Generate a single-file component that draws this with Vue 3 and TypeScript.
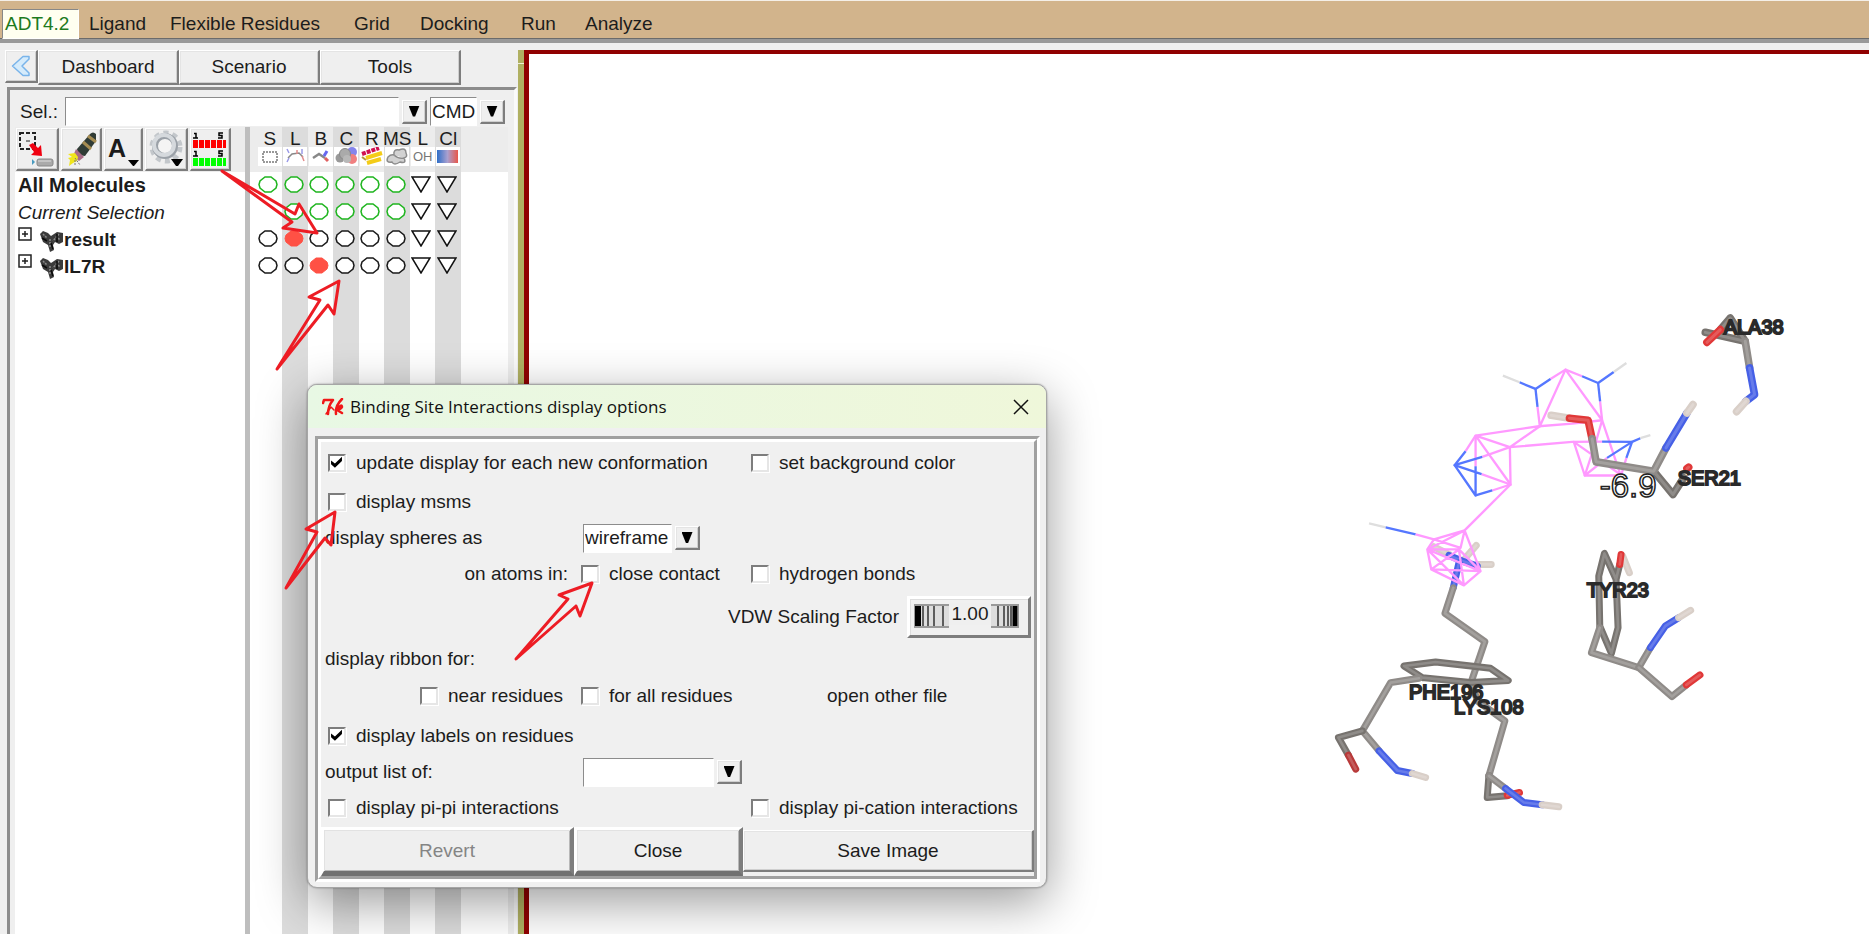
<script setup lang="ts">
import { ref } from 'vue'

type Mark = 'none' | 'green' | 'black' | 'filled' | 'menu'
interface Row { name: string; kind: 'all' | 'selection' | 'molecule'; marks: Mark[] }
interface Stick { color: string; points: string }

const menus = ['Ligand', 'Flexible Residues', 'Grid', 'Docking', 'Run', 'Analyze']
const tabs = ['Dashboard', 'Scenario', 'Tools']

const rows: Row[] = [
  { name: 'All Molecules', kind: 'all', marks: ['green', 'green', 'green', 'green', 'green', 'green', 'menu', 'menu'] },
  { name: 'Current Selection', kind: 'selection', marks: ['none', 'green', 'green', 'green', 'green', 'green', 'menu', 'menu'] },
  { name: 'result', kind: 'molecule', marks: ['black', 'filled', 'black', 'black', 'black', 'black', 'menu', 'menu'] },
  { name: 'IL7R', kind: 'molecule', marks: ['black', 'black', 'filled', 'black', 'black', 'black', 'menu', 'menu'] },
]
const columns = ['S', 'L', 'B', 'C', 'R', 'MS', 'L', 'Cl']

const update = ref(true)
const labels = ref(true)
const off = ref<string[]>([])

const GRAY = '#8f8b88'
const BLUE = '#4660e6'
const RED = '#e03838'
const BONE = '#d9cfc8'
const DARK = '#77736f'
const PINK = '#ff99ff'
const AZURE = '#5577ff'
const PALE = '#dedede'

const upperThin: Stick[] = [
  { color: PINK, points: '350,408 540,380 640,372 730,362' },
  { color: PINK, points: '350,500 350,408 453,443 455,555 350,408' },
  { color: PINK, points: '543,380 453,443 640,427 730,426' },
  { color: PINK, points: '453,443 370,472' },
  { color: PINK, points: '320,455 350,408' },
  { color: PINK, points: '368,524 455,555 400,573' },
  { color: PINK, points: '455,555 317,693' },
  { color: PINK, points: '536,322 543,380 620,210 730,362 724,305' },
  { color: PINK, points: '670,230 620,210 575,238' },
  { color: PINK, points: '730,362 712,425 678,528 645,427 785,525 730,362' },
  { color: PINK, points: '745,475 678,528 787,528 803,475' },
  { color: AZURE, points: '370,472 287,497 320,455' },
  { color: AZURE, points: '350,500 350,588 287,497 368,524' },
  { color: AZURE, points: '350,588 400,573' },
  { color: AZURE, points: '670,230 718,250 765,217' },
  { color: AZURE, points: '718,250 724,305' },
  { color: AZURE, points: '575,238 530,268 482,248' },
  { color: AZURE, points: '530,268 536,322' },
  { color: AZURE, points: '730,426 820,427 745,475' },
  { color: AZURE, points: '803,475 820,427 845,416' },
  { color: PALE, points: '765,217 803,190' },
  { color: PALE, points: '482,248 432,228' },
  { color: PALE, points: '845,416 875,407' },
]
const upperSticks: Stick[] = [
  { color: BONE, points: '577,347 632,356' },
  { color: RED, points: '632,356 688,362 700,418' },
  { color: RED, points: '985,507 990,503' },
  { color: DARK, points: '885,515 943,585 975,535' },
  { color: GRAY, points: '700,418 712,487 885,515 922,445' },
  { color: BLUE, points: '922,445 985,340' },
  { color: BONE, points: '985,340 1003,315' },
  { color: DARK, points: '1040,98 1160,125 1115,55 1085,90' },
  { color: RED, points: '1085,90 1045,128' },
  { color: GRAY, points: '1160,125 1173,205' },
  { color: BLUE, points: '1173,205 1188,285 1162,305' },
  { color: BONE, points: '1162,305 1134,336' },
]
const lowerSticks: Stick[] = [
  { color: BONE, points: '345,142 390,165' },
  { color: BONE, points: '472,138 440,175' },
  { color: BONE, points: '475,195 517,195' },
  { color: BLUE, points: '390,168 430,185 475,200' },
  { color: BLUE, points: '420,190 403,265' },
  { color: GRAY, points: '403,265 378,342 498,427 458,545 475,605 558,665 510,830' },
  { color: DARK, points: '510,830 505,895 565,890' },
  { color: RED, points: '565,889 602,880' },
  { color: GRAY, points: '510,830 560,868' },
  { color: BLUE, points: '560,868 615,910 670,917' },
  { color: BONE, points: '670,917 720,923' },
  { color: DARK, points: '310,535 255,500 350,488 515,507 568,544 455,550 310,535' },
  { color: GRAY, points: '300,537 215,550 130,695 180,755' },
  { color: DARK, points: '130,695 58,715 88,768' },
  { color: '#b83a3a', points: '88,768 110,810' },
  { color: BLUE, points: '180,755 235,814 280,823' },
  { color: BONE, points: '280,823 320,835' },
  { color: DARK, points: '892,240 857,162 840,230 843,380 878,462 898,385 892,240 903,195' },
  { color: BONE, points: '912,170 932,220' },
  { color: RED, points: '903,195 907,165' },
  { color: GRAY, points: '843,385 818,460 960,505 995,445' },
  { color: BLUE, points: '995,445 1040,380 1080,355' },
  { color: BONE, points: '1080,355 1116,333' },
  { color: GRAY, points: '960,505 1060,592 1103,557' },
  { color: RED, points: '1103,557 1144,527' },
]
const lowerThin: Stick[] = [
  { color: PALE, points: '150,72 200,84' },
  { color: AZURE, points: '200,84 290,105' },
  { color: PINK, points: '290,105 345,120 437,93 325,150 345,120 425,145 437,93 485,215 435,258 337,210 325,150 420,150 485,215 337,210 420,150 435,258 325,150 485,215' },
]
const residues = [
  { text: 'ALA38', x: 1725, y: 333 },
  { text: 'SER21', x: 1679, y: 485 },
  { text: 'TYR23', x: 1588, y: 597 },
  { text: 'PHE196', x: 1410, y: 699 },
  { text: 'LYS108', x: 1455, y: 714 },
]
const pointers = [
  '222,171 295,214 299,204 317,233 283,228 292,222',
  '277,369 320,300 309,297 339,281 334,314 328,305',
  '286,588 317,532 306,529 335,512 331,545 325,538',
  '516,659 568,599 559,595 592,583 580,616 576,606',
]
</script>

<template>
  <div class="app">
    <nav class="menubar">
      <button class="brand">ADT4.2</button>
      <button v-for="m in menus" :key="m" class="menu">{{ m }}</button>
    </nav>

    <div class="workspace">
      <aside class="side">
        <div class="tabs">
          <button class="raised back" aria-label="Collapse">
            <svg width="20" height="22" viewBox="0 0 20 22"><path d="M12 1.500H18V4L11 11L18 18V20.500H12L1.500 11Z" fill="#d5ebfb" stroke="#79b4ea" stroke-width="1.500" stroke-linejoin="round" /></svg>
          </button>
          <button v-for="t in tabs" :key="t" class="raised tab">{{ t }}</button>
        </div>

        <div class="panel">
          <div class="selrow">
            <label for="sel">Sel.:</label>
            <input id="sel" class="entry grow" type="text">
            <button class="raised arrow" aria-label="Selection history"><i class="tri"></i></button>
            <span class="combo">
              <select class="entry cmd" aria-label="Command level"><option>CMD</option></select>
              <span class="raised arrow"><i class="tri"></i></span>
            </span>
          </div>

          <div class="panes">
            <div class="tree">
              <div class="tools">
                <button class="raised" aria-label="Select">
                  <svg width="38" height="38" viewBox="0 0 38 38">
                    <rect x="2" y="3" width="15" height="16" fill="none" stroke="#222" stroke-width="2" stroke-dasharray="4 2" />
                    <path d="M8 11h4" stroke="#222" />
                    <path d="M11 15l4-2 5 5 3-3 1 11-11-1 3-3z" fill="#f00010" />
                    <rect x="19" y="29" width="16" height="7" rx="2" fill="#aaa" stroke="#888" /><path d="M20 31h13" stroke="#ddd" /><path d="M14 29l3 3-3 3z" fill="#4a9bc0" />
                  </svg>
                </button>
                <button class="raised" aria-label="Highlight">
                  <svg width="36" height="38" viewBox="0 0 36 38">
                    <path d="M14 19L27 4Q30 1 33 4V11L22 26L15 25Z" fill="#303c36" />
                    <path d="M20 12l8 7M25 6l8 6" stroke="#a58c52" stroke-width="3" />
                    <path d="M13 19l8 8-5 4-6-5z" fill="#a96b87" />
                    <path d="M5 24l7-1 3 4-1 4-4 2-4 3 1-6-2-2 4-1z" fill="#f0e51c" /><path d="M12 28l5 7M12 30v5" stroke="#777" stroke-dasharray="2 1" />
                  </svg>
                </button>
                <button class="raised" aria-label="Label">
                  <svg width="34" height="38" viewBox="0 0 34 38">
                    <text x="2" y="27" font-family="'Liberation Sans', Arial, sans-serif" font-size="25" font-weight="bold" fill="#1b1b1b">A</text>
                    <path d="M22 30H33L28 36H27Z" />
                  </svg>
                </button>
                <button class="raised" aria-label="Settings">
                  <svg width="38" height="38" viewBox="0 0 38 38">
                    <circle cx="19" cy="17" r="14" fill="none" stroke="#c3c7cb" stroke-width="5" stroke-dasharray="5 4" />
                    <ellipse cx="18" cy="16" rx="10" ry="10" fill="#f4f4f4" stroke="#9ba1a8" stroke-width="6" />
                    <ellipse cx="17" cy="15" rx="10" ry="10" fill="none" stroke="#d5d9dd" stroke-width="4" />
                    <path d="M24 29H36L31 36H29Z" />
                  </svg>
                </button>
                <button class="raised" aria-label="Sequence viewer">
                  <svg width="36" height="38" viewBox="0 0 36 38">
                    <path d="M1 14H34" stroke="#f00" stroke-width="8" stroke-dasharray="5 1" />
                    <path d="M1 32H34" stroke="#0f0" stroke-width="8" stroke-dasharray="5 1" />
                    <path d="M2 3.500h2v4M1 8h5M31 3h-4v2.500h3V8h-4M2 21.500h2v4M1 26h5M31 21h-4v2.500h3V26h-4" fill="none" stroke="#000" stroke-width="1.500" />
                  </svg>
                </button>
              </div>
              <ul class="list">
                <li v-for="r in rows" :key="r.name" :class="r.kind">
                  <template v-if="r.kind === 'molecule'">
                    <svg class="expand" width="14" height="14" viewBox="0 0 14 14"><path d="M1 1H13V13H1ZM4 7H10M7 4V10" fill="#fff" stroke="#222" stroke-width="1.500" /></svg>
                    <svg class="mol" width="25" height="22" viewBox="0 0 25 22">
                      <path d="M1 4L4 1L9 3L12 6L18 2L24 3V12L20 14L16 12L14 15L15 20L11 22L9 15L4 12Z" fill="#3b3b3b" />
                      <path d="M4 4l4 4M17 6l4 4M11 9v9M20 4l-6 7" stroke="#8a8a8a" stroke-width="1.500" stroke-dasharray="2 1" /><path d="M3 8l5 3M18 4v8M12 13l2 6" stroke="#0a0a0a" stroke-width="1.500" />
                    </svg>
                  </template>
                  <span>{{ r.name }}</span>
                </li>
              </ul>
            </div>
            <div class="divider"></div>
            <div class="matrix">
              <div class="stripes">
                <table>
                  <thead>
                    <tr>
                      <th v-for="(c, i) in columns" :key="i" scope="col">
                        <span>{{ c }}</span>
                        <svg width="24" height="19" viewBox="0 0 24 19">
                          <rect width="24" height="19" fill="#fff" />
                          <rect v-if="i === 0" x="5" y="5" width="14" height="10" fill="none" stroke="#333" stroke-dasharray="2 1" />
                          <g v-else-if="i === 1" fill="none" stroke-width="1.500"><path d="M5 11L9 7L16 6L20 10" stroke="#888" /><path d="M4 2l2 4M19 2v5M4 15l2-4" stroke="#9a9ae8" /><path d="M19 9l2 5M14 3v4" stroke="#e28c8c" /></g>
                          <g v-else-if="i === 2" fill="none"><path d="M4 11L10 7L16 11" stroke="#888" stroke-width="2.500" /><path d="M15 9l3-5" stroke="#6666f0" stroke-width="3" /><path d="M16 11l3 3" stroke="#e06060" stroke-width="3" /></g>
                          <g v-else-if="i === 3"><circle cx="18" cy="5" r="5" fill="#8585ec" /><circle cx="18" cy="12" r="5" fill="#f08080" /><circle cx="6" cy="11" r="4.500" fill="#999" /><circle cx="11" cy="7" r="5.500" fill="#aaa" stroke="#888" /><circle cx="13" cy="12" r="4" fill="#b8b8b8" /></g>
                          <g v-else-if="i === 4" fill="none"><path d="M2 7L19 1" stroke="#d01050" stroke-width="4" stroke-dasharray="4 1" /><path d="M6 11L22 6M7 16L21 12" stroke="#f4cc18" stroke-width="4" /><path d="M2 10L6 13" stroke="#b8943c" stroke-width="2" /></g>
                          <path v-else-if="i === 5" d="M3 10Q6 7 9 8Q8 2 14 3Q21 0 21 6Q23 10 19 11Q22 17 15 15Q9 19 7 15Q0 16 3 10ZM9 8Q13 12 19 11" fill="#d2d2d2" stroke="#8c8c8c" stroke-width="1.500" />
                          <text v-else-if="i === 6" x="2" y="14" font-family="'Liberation Sans', Arial, sans-serif" font-size="13" fill="#777">OH</text>
                          <template v-else><rect x="1" y="3" width="21" height="13" fill="url(#ramp)" /></template>
                        </svg>
                      </th>
                    </tr>
                  </thead>
                  <tbody>
                    <tr v-for="r in rows" :key="r.name">
                      <td v-for="(m, i) in r.marks" :key="i">
                        <button v-if="m !== 'none'" class="mark" :aria-label="r.name + ' ' + columns[i]">
                          <svg width="20" height="17" viewBox="0 0 20 17">
                            <path v-if="m === 'menu'" d="M1 1H19L10 16Z" fill="#fff" stroke="#111" stroke-width="1.500" />
                            <path v-else d="M7 1H13L18 5L19 8.500L18 12L13 16H7L2 12L1 8.500L2 5Z" :class="m" />
                          </svg>
                        </button>
                      </td>
                    </tr>
                  </tbody>
                </table>
              </div>
            </div>
          </div>
        </div>
      </aside>

      <div class="sash"></div>

      <main class="viewer">
        <svg class="scene" viewBox="529 53 1340 881" preserveAspectRatio="xMinYMin meet">
          <defs><linearGradient id="ramp"><stop offset="0" stop-color="#2f6fc8" /><stop offset=".5" stop-color="#a9a0cf" /><stop offset="1" stop-color="#e8574a" /></linearGradient></defs>
          <g fill="none" stroke-linejoin="round">
            <g transform="translate(1360 299) scale(.3333)">
              <polyline v-for="(s, i) in upperThin" :key="'t' + i" :points="s.points" :stroke="s.color" stroke-width="7" />
              <g v-for="(s, i) in upperSticks" :key="'s' + i" stroke-linecap="round">
                <polyline :points="s.points" :stroke="s.color" stroke-width="23" />
                <polyline :points="s.points" stroke="#fff" stroke-opacity=".18" stroke-width="9" />
              </g>
            </g>
            <g transform="translate(1320 499) scale(.3333)">
              <g v-for="(s, i) in lowerSticks" :key="'l' + i" stroke-linecap="round">
                <polyline :points="s.points" :stroke="s.color" stroke-width="21" />
                <polyline :points="s.points" stroke="#fff" stroke-opacity=".18" stroke-width="8" />
              </g>
              <polyline v-for="(s, i) in lowerThin" :key="'p' + i" :points="s.points" :stroke="s.color" stroke-width="7" />
            </g>
          </g>
          <text v-for="r in residues" :key="r.text" class="residue" :x="r.x" :y="r.y">{{ r.text }}</text>
          <text class="energy" x="1601" y="497">-6.9</text>
        </svg>
      </main>
    </div>

    <section class="dialog" role="dialog" aria-labelledby="dlg-title">
      <header class="titlebar">
        <svg width="23" height="18" viewBox="0 0 23 18" fill="none" stroke="#f01818" stroke-linecap="round" stroke-linejoin="round"><path d="M1 5L2 2L11 2Q6 8 6 16" stroke-width="2.500" /><path d="M20 1Q13 8 14 16M14 12Q20 5 20 9Q19 11 15 12L20 15" stroke-width="2.500" /><path d="M4 16L9 9L12 12" stroke-width="1.500" /></svg>
        <h1 id="dlg-title">Binding Site Interactions display options</h1>
        <button class="close" aria-label="Close window"><svg width="16" height="16" viewBox="0 0 16 16"><path d="M1 1L15 15M15 1L1 15" stroke="#111" stroke-width="1.500" /></svg></button>
      </header>
      <div class="groove">
        <div class="inner">
          <form class="form" @submit.prevent>
            <label class="check span2"><input v-model="update" type="checkbox">update display for each new conformation</label>
            <label class="check flush"><input v-model="off" value="bg" type="checkbox">set background color</label>

            <label class="check span3"><input v-model="off" value="msms" type="checkbox">display msms</label>

            <label class="plain" for="spheres">display spheres as</label>
            <span class="combo span2">
              <select id="spheres" class="entry wire"><option>wireframe</option></select>
              <span class="raised arrow"><i class="tri"></i></span>
            </span>

            <span class="plain end">on atoms in:</span>
            <label class="check flush"><input v-model="off" value="contact" type="checkbox">close contact</label>
            <label class="check flush"><input v-model="off" value="hbond" type="checkbox">hydrogen bonds</label>

            <div class="vdw span3">
              <label for="vdw">VDW Scaling Factor</label>
              <span class="wheel">
                <svg width="35" height="24" viewBox="0 0 35 24"><path d="M0 0H35V24H0Z" fill="#999" /><path d="M1 2H35V22H1Z" fill="#ddd" /><path d="M4 2V22" stroke="#000" stroke-width="6" /><path d="M9 2V22M14 2V22M20 2V22M29 2V22" stroke="#333" stroke-width="1.500" /></svg>
                <input id="vdw" type="text" value="1.00">
                <svg width="28" height="24" viewBox="0 0 28 24"><path d="M0 0H28V24H0Z" fill="#999" /><path d="M0 2H27V22H0Z" fill="#ddd" /><path d="M24 2V22" stroke="#000" stroke-width="5" /><path d="M7 2V22M13 2V22M17 2V22M20 2V22" stroke="#333" stroke-width="1.500" /></svg>
              </span>
            </div>

            <span class="plain span3">display ribbon for:</span>

            <label class="check indent"><input v-model="off" value="near" type="checkbox">near residues</label>
            <label class="check flush"><input v-model="off" value="all" type="checkbox">for all residues</label>
            <span class="plain other">open other file</span>

            <label class="check span3"><input v-model="labels" type="checkbox">display labels on residues</label>

            <label class="plain" for="output">output list of:</label>
            <span class="combo span2">
              <select id="output" class="entry out"><option></option></select>
              <span class="raised arrow"><i class="tri"></i></span>
            </span>

            <label class="check span2"><input v-model="off" value="pipi" type="checkbox">display pi-pi interactions</label>
            <label class="check flush"><input v-model="off" value="pication" type="checkbox">display pi-cation interactions</label>
          </form>
          <div class="actions">
            <button class="thick" disabled>Revert</button>
            <button class="thick">Close</button>
            <button class="raised save">Save Image</button>
          </div>
        </div>
      </div>
    </section>

    <svg class="pointers" width="1869" height="934" aria-hidden="true">
      <polygon v-for="p in pointers" :key="p" :points="p" />
    </svg>
  </div>
</template>

<style>
body { margin: 0; }
</style>

<style scoped>
* { box-sizing: border-box; }
.app {
  position: relative; display: flex; flex-direction: column; min-height: 100vh; overflow: hidden;
  background: #efefef; color: #1c1c1c;
  font: 19px/22px "Liberation Sans", Arial, sans-serif;
}
button, input, select { font: inherit; color: inherit; margin: 0; padding: 0; border-radius: 0; }
button { border: 0; background: none; }

.menubar {
  display: grid; grid-template-columns: 77px 81px 184px 66px 101px 64px 120px;
  height: 43px; padding: 8px 0 0 2px; background: #d2b48c;
  border-top: 1px solid #f4efe8; border-bottom: 4px solid #999; box-shadow: inset 0 -1px #6b6b6b;
}
.menu { text-align: left; padding-left: 10px; white-space: nowrap; }
.brand { background: #fffff0; color: #1d7a1d; border: solid; border-width: 1px; border-color: #888 #fff #fff #888; text-align: left; padding-left: 2px; }

.workspace { display: flex; flex: 1; padding-top: 7px; }
.side { width: 518px; display: flex; flex-direction: column; }
.tabs { display: flex; height: 35px; padding-left: 5px; }
.raised {
  background: #efefef; border-style: solid; border-width: 1px 2px 2px 1px;
  border-color: #fff #7d7d7d #7d7d7d #fff; box-shadow: inset 1px 1px #e4e4e4, inset -1px -1px #cfcfcf;
}
.tab { width: 141px; }
.back { width: 33px; height: 33px; display: flex; align-items: center; justify-content: center; }

.panel {
  flex: 1; display: flex; flex-direction: column; margin: 2px 1px 0 7px; padding: 7px 6px 0 5px;
  border: solid; border-width: 3px 3px 0; border-color: #8c8c8c #fafafa #8c8c8c #8c8c8c;
}
.selrow { display: flex; align-items: center; height: 29px; padding: 0 3px 0 5px; }
.selrow label { width: 45px; }
.entry {
  height: 29px; appearance: none; background: #fff; outline: 0;
  border: 1px solid; border-color: #8c8c8c #fff #fff #8c8c8c; padding: 0 1px;
}
.grow { flex: 1; min-width: 0; }
.arrow { display: flex; align-items: center; justify-content: center; width: 25px; height: 24px; margin: 0 3px; }
.selrow .combo .arrow { margin-right: 0; }
.tri { width: 11px; height: 11px; background: #000; clip-path: polygon(0 0, 100% 0, 60% 100%, 40% 100%); }
.combo { display: flex; align-items: center; }
.cmd { width: 47px; }

.panes { flex: 1; display: flex; padding-top: 1px; }
.tree { flex: 1; background: #fff; }
.tools { display: flex; gap: 2px; height: 45px; padding: 1px 0 1px 1px; background: #ececec; }
.tools .raised { padding: 1px; display: flex; align-items: center; justify-content: center; }
.list { list-style: none; margin: 0; padding: 0; }
.list li { display: flex; height: 27px; line-height: 27px; padding-left: 3px; font-weight: bold; }
.list .all { font-size: 20px; }
.list .selection { font-weight: normal; font-style: italic; }
.mol { margin: 4px 0 0 7px; }
.expand { margin-top: 1px; }
.divider { width: 5px; background: #bebebe; }
.matrix { width: 258px; padding-left: 7px; background: linear-gradient(#ececec 45px, #fff 45px); }
.stripes { width: 204px; height: 100%; background: repeating-linear-gradient(90deg, transparent 0 12.5%, #dcdcdc 12.5% 25%); }
table { width: 100%; border-collapse: collapse; table-layout: fixed; }
th { height: 44px; padding: 2px 0 3px; font-weight: normal; vertical-align: top; }
th span { display: flex; justify-content: center; height: 18px; line-height: 20px; }
th svg { display: block; margin: 0 auto; }
td { height: 27px; padding: 0 3px 0 0; text-align: center; }
.mark { display: block; height: 17px; margin: 0 auto; }
.mark svg { display: block; }
.green, .black { fill: #fff; stroke-width: 1.500; }
.green { stroke: #1fb51f; }
.black { stroke: #1a1a1a; }
.filled { fill: #ff5145; stroke: #ff5145; }

.sash { width: 6px; background: linear-gradient(#b0b062 13px, #f0f0d8 13px 14px, #b0b062 14px); }
.viewer { flex: 1; min-width: 0; background: #fff; border: solid #900000; border-width: 4px 0 0 5px; position: relative; }
.scene { position: absolute; inset: 0; width: 100%; height: 100%; }
.residue { font: 20px "Liberation Sans", Arial, sans-serif; fill: #555; stroke: #2a2a2a; stroke-width: 2; }
.energy { font: 33px "Liberation Sans", Arial, sans-serif; fill: #fff; stroke: #222; stroke-width: 1.500; }

.dialog {
  position: absolute; left: 307px; top: 384px; width: 740px; padding-bottom: 5px;
  background: #f0f0f0; border: 1px solid #a6a6a6; border-radius: 10px; overflow: hidden;
  box-shadow: 0 0 2px rgba(0, 0, 0, .4), 0 14px 50px rgba(0, 0, 0, .4);
}
.titlebar { display: flex; align-items: center; height: 43px; padding: 0 17px 0 14px; background: linear-gradient(90deg, #e8f8e4, #eff7da); color: #111; }
.titlebar h1 { flex: 1; margin: 0 0 0 5px; font: 17px/24px "Open Sans", "Noto Sans", sans-serif; }
.close svg { display: block; }
.groove { margin: 8px 6px 0 7px; border: 3px solid; border-color: #a0a0a0 #fff #fff #a0a0a0; }
.inner { border: 3px solid; border-color: #fff #a0a0a0 #a0a0a0 #fff; }
.form {
  display: grid; grid-template-columns: 260px 170px 1fr; align-items: center;
  grid-template-rows: 41px 38px 34px 38px 48px 35px 39px 41px 32px 39px; white-space: nowrap;
}
.span2 { grid-column: span 2; }
.span3 { grid-column: span 3; }
.check { display: flex; align-items: center; gap: 10px; padding-left: 7px; }
.flush { padding-left: 0; }
.indent { padding-left: 99px; }
.check input {
  appearance: none; width: 18px; height: 18px; background: #fff;
  border: 2px solid; border-color: #7d7d7d #e6e6e6 #e6e6e6 #7d7d7d; box-shadow: 1px 1px #fff;
}
.check input:checked::before { content: ""; display: block; width: 13px; height: 13px; background: #000; clip-path: polygon(8% 38%, 38% 62%, 92% 10%, 92% 42%, 38% 94%, 8% 68%); }
.plain { padding-left: 4px; }
.end { text-align: right; padding-right: 13px; }
.other { padding-left: 76px; }
.form .combo { padding-left: 2px; }
.wire { width: 89px; }
.out { width: 131px; }
.vdw { display: flex; align-items: center; justify-content: flex-end; gap: 8px; padding-right: 3px; }
.wheel { display: flex; width: 124px; height: 42px; padding: 4px 0 0 4px; border: 3px solid; border-color: #fff #7d7d7d #7d7d7d #fff; box-shadow: inset 1px 1px #ddd; }
.wheel svg { margin-top: 1px; }
.wheel input { width: 42px; height: 22px; border: 0; background: #efefef; text-align: center; }
.actions { display: grid; grid-template-columns: 253px 169px 1fr; height: 49px; }
.thick { background: #efefef; border: solid; border-width: 3px 4px 5px 3px; border-color: #fff #7d7d7d #707070 #fff; box-shadow: inset 1px 1px #e2e2e2, inset -1px -1px #b8b8b8; }
.thick:disabled { color: #858585; }
.save { margin: 3px 0 4px; }

.pointers { position: absolute; left: 0; top: 0; pointer-events: none; fill: none; stroke: #ed1c24; stroke-width: 3; stroke-linejoin: round; }
</style>
